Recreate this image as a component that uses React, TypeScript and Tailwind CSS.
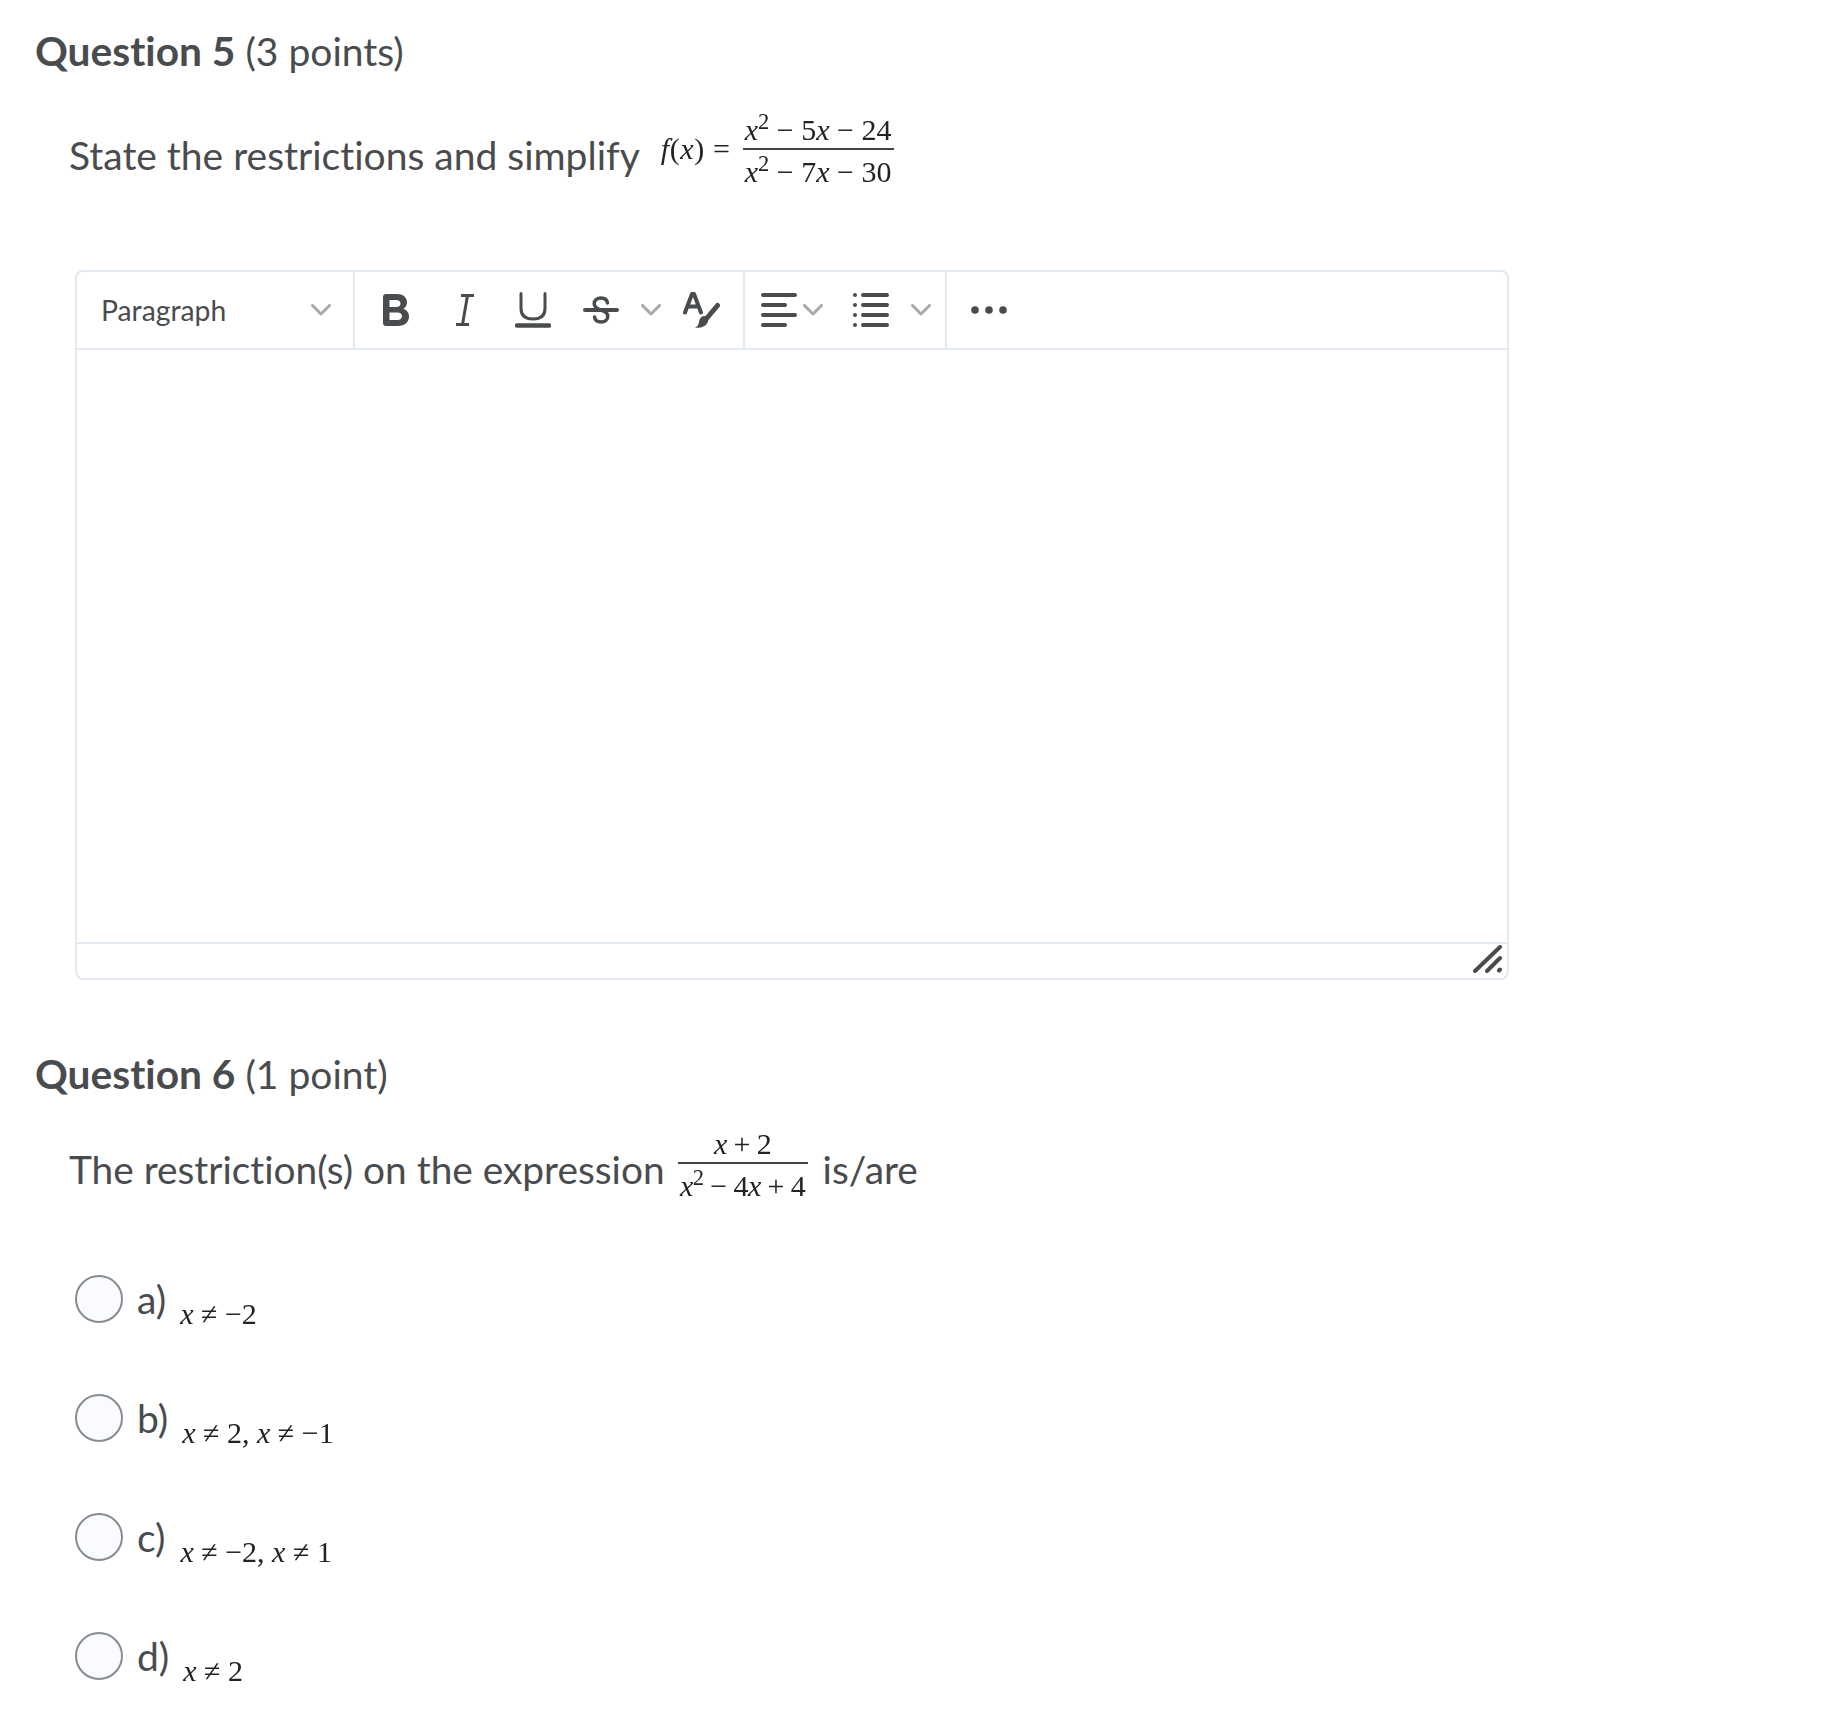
import type { ReactNode } from "react";

const ink = "#494c4e";

function Chevron({ className = "" }: { className?: string }) {
  return (
    <svg width="20" height="12" viewBox="0 0 20 12" className={`shrink-0 ${className}`}>
      <path d="M1.5 1.5 10 10l8.5-8.5" fill="none" stroke="#a9a9a9" strokeWidth="3" strokeLinecap="round" strokeLinejoin="round" />
    </svg>
  );
}

function BoldIcon() {
  return (
    <svg width="27" height="32" viewBox="0 0 27 32" className="shrink-0">
      <path d="M0 3a3 3 0 0 1 3-3h11c6 0 10 3.300 10 8.300 0 2.900-1.300 5.200-3.600 6.500 3.300 1.200 5.600 4 5.600 7.700C26 28.300 21.500 32 15 32H3a3 3 0 0 1-3-3Zm6.500 3v7h7c2.400 0 4-1.400 4-3.500S15.900 6 13.500 6Zm0 12.500V26h8c2.700 0 4.500-1.500 4.500-3.800s-1.800-3.700-4.500-3.700Z" fill={ink} fillRule="evenodd" />
    </svg>
  );
}

function ItalicIcon() {
  return (
    <svg width="20" height="32" viewBox="0 0 20 32" className="shrink-0">
      <path d="M6 1.500h13M1 30.500h13M12.500 1.500l-5 29" fill="none" stroke={ink} strokeWidth="3" />
    </svg>
  );
}

function UnderlineIcon() {
  return (
    <svg width="36" height="36" viewBox="0 0 36 36" className="shrink-0">
      <path d="M6 1.500v15c0 7 4.500 10.500 12 10.500s12-3.500 12-10.500v-15" fill="none" stroke={ink} strokeWidth="3" strokeLinecap="round" />
      <path d="M2 33.500h32" stroke={ink} strokeWidth="4.500" strokeLinecap="round" />
    </svg>
  );
}

function StrikeIcon() {
  return (
    <svg width="36" height="28" viewBox="0 0 36 28" className="shrink-0">
      <path d="M24.500 7C24 3.800 21.500 2 18 2c-4 0-6.800 2.200-6.800 5.500 0 3.600 3.100 5.400 6.800 6.500 3.700 1.100 6.800 2.900 6.800 6.500 0 3.300-2.800 5.500-6.800 5.500-3.500 0-6-1.800-6.500-5" fill="none" stroke={ink} strokeWidth="3.500" strokeLinecap="round" />
      <path d="M2 14h32" stroke={ink} strokeWidth="4" strokeLinecap="round" />
    </svg>
  );
}

function ColorIcon() {
  return (
    <svg width="37" height="37" viewBox="0 0 37 37" className="shrink-0">
      <path d="M2 20.500 9 2h2l7 18.500M5 14.500h10.500" fill="none" stroke={ink} strokeWidth="4" strokeLinecap="round" strokeLinejoin="round" />
      <path d="M34.500 13.500 24 26" stroke={ink} strokeWidth="5" strokeLinecap="round" />
      <path d="M18.500 25c2-1.500 5-1 6 .5s1.200 3.500-.5 6C22 34.500 18 36.500 12 35.500c3-1 3.500-3 4-5.500.3-2 1-4 2.500-5Z" fill={ink} />
    </svg>
  );
}

function AlignIcon() {
  return (
    <svg width="36" height="34" viewBox="0 0 36 34" className="shrink-0">
      <path d="M2 2h32M2 12h22M2 22h32M2 32h22" stroke={ink} strokeWidth="4" strokeLinecap="round" />
    </svg>
  );
}

function ListIcon() {
  return (
    <svg width="36" height="34" viewBox="0 0 36 34" className="shrink-0">
      <path d="M10 2h24M10 12h24M10 22h24M10 32h24" stroke={ink} strokeWidth="4" strokeLinecap="round" />
      <circle cx="2" cy="2" r="2" fill={ink} />
      <circle cx="2" cy="12" r="2" fill={ink} />
      <circle cx="2" cy="22" r="2" fill={ink} />
      <circle cx="2" cy="32" r="2" fill={ink} />
    </svg>
  );
}

function MoreIcon() {
  return (
    <svg width="36" height="8" viewBox="0 0 36 8" className="shrink-0">
      <circle cx="4" cy="4" r="3.800" fill={ink} />
      <circle cx="18" cy="4" r="3.800" fill={ink} />
      <circle cx="32" cy="4" r="3.800" fill={ink} />
    </svg>
  );
}

function ResizeGrip() {
  return (
    <svg width="30" height="28" viewBox="0 0 30 28" className="absolute right-[4px] bottom-[5px]">
      <path d="M2 26 27 2M14 26 27 13M26 25.500l1-1" fill="none" stroke={ink} strokeWidth="4" strokeLinecap="round" />
    </svg>
  );
}

// the equations are small raster images in the original, hence the soft serif look
function MathText({ children, className = "" }: { children: ReactNode; className?: string }) {
  return (
    <span className={`font-['Liberation_Serif',serif] text-[#222] whitespace-pre blur-[0.3px] ${className}`}>
      {children}
    </span>
  );
}

function Fraction({ top, bottom, className = "" }: { top: ReactNode; bottom: ReactNode; className?: string }) {
  return (
    <span className={`inline-flex shrink-0 flex-col items-stretch text-center ${className}`}>
      <MathText className="border-b-2 border-[#444] text-[30px] leading-[36px]">{top}</MathText>
      <MathText className="text-[30px] leading-[44px]">{bottom}</MathText>
    </span>
  );
}

function Heading({ label, points }: { label: string; points: string }) {
  return (
    <h2 className="text-[39px] leading-[50px] text-[#494c4e]">
      <span className="text-[40.7px] font-bold">{label}</span> {points}
    </h2>
  );
}

const options: { letter: string; math: ReactNode; mathClass: string }[] = [
  { letter: "a)", math: <><i>x</i> ≠ −2</>, mathClass: "ml-[14px]" },
  { letter: "b)", math: <><i>x</i> ≠ 2, <i>x</i> ≠ −1</>, mathClass: "ml-[14px]" },
  { letter: "c)", math: <><i>x</i> ≠ −2, <i>x</i> ≠ 1</>, mathClass: "ml-[15px]" },
  { letter: "d)", math: <><i>x</i> ≠ 2</>, mathClass: "ml-[14px]" },
];

export default function App() {
  return (
    <div className="min-h-[1710px] bg-white pt-[26px] pl-[35px] font-['Lato',sans-serif] text-[#494c4e] [font-variant-ligatures:none]">
      <Heading label="Question 5" points="(3 points)" />

      <div className="mt-[36px] ml-[34px] flex items-center">
        <span className="mt-[4px] text-[39px] leading-[48px]">State the restrictions and simplify</span>
        <MathText className="mb-[10px] ml-[21px] text-[30px] tracking-[0.6px]"><i>f</i>(<i>x</i>) = </MathText>
        <Fraction
          className="ml-[4px] w-[151px]"
          top={<><i>x</i><sup>2</sup> − 5<i>x</i> − 24</>}
          bottom={<><i>x</i><sup>2</sup> − 7<i>x</i> − 30</>}
        />
      </div>

      <div className="relative mt-[76px] ml-[40px] w-[1434px] rounded-[8px] border-2 border-[#e3e9f1]">
        <div className="flex h-[78px] items-center border-b-2 border-[#e3e9f1]">
          <div className="flex h-full w-[278px] items-center border-r-2 border-[#e3e9f1] pl-[24px]">
            <span className="text-[28.3px] leading-none">Paragraph</span>
            <Chevron className="ml-[85px]" />
          </div>
          <div className="flex h-full w-[390px] items-center border-r-2 border-[#e3e9f1] pl-[28px]">
            <BoldIcon />
            <span className="ml-[45px]"><ItalicIcon /></span>
            <span className="ml-[40px]"><UnderlineIcon /></span>
            <span className="ml-[32px]"><StrikeIcon /></span>
            <Chevron className="ml-[22px]" />
            <span className="ml-[22px]"><ColorIcon /></span>
          </div>
          <div className="flex h-full w-[202px] items-center border-r-2 border-[#e3e9f1] pl-[16px]">
            <AlignIcon />
            <Chevron className="ml-[6px]" />
            <span className="ml-[30px]"><ListIcon /></span>
            <Chevron className="ml-[22px]" />
          </div>
          <div className="flex h-full items-center pl-[24px]">
            <MoreIcon />
          </div>
        </div>
        <div className="h-[594px] border-b-2 border-[#e3e9f1]" />
        <div className="h-[34px]" />
        <ResizeGrip />
      </div>

      <div className="mt-[69px]">
        <Heading label="Question 6" points="(1 point)" />
      </div>

      <div className="mt-[27px] ml-[34px] flex items-center">
        <span className="mt-[4px] text-[38.85px] leading-[48px]">The restriction(s) on the expression</span>
        <Fraction
          className="ml-[13px] w-[130px] tracking-[-0.6px]"
          top={<><i>x</i> + 2</>}
          bottom={<><i>x</i><sup>2</sup> − 4<i>x</i> + 4</>}
        />
        <span className="mt-[4px] ml-[15px] text-[38.85px] leading-[48px]">is/are</span>
      </div>

      <div className="mt-[67px] ml-[40px] flex flex-col gap-[71px]">
        {options.map((o) => (
          <div key={o.letter} className="flex h-[48px] items-center">
            <span className="size-[48px] shrink-0 rounded-full border-2 border-[#868c8f] bg-[#f9fbff]" />
            <span className="ml-[14px] text-[39px] leading-[48px]">{o.letter}</span>
            <MathText className={`${o.mathClass} mt-[30px] text-[30px] leading-[30px]`}>{o.math}</MathText>
          </div>
        ))}
      </div>
    </div>
  );
}
